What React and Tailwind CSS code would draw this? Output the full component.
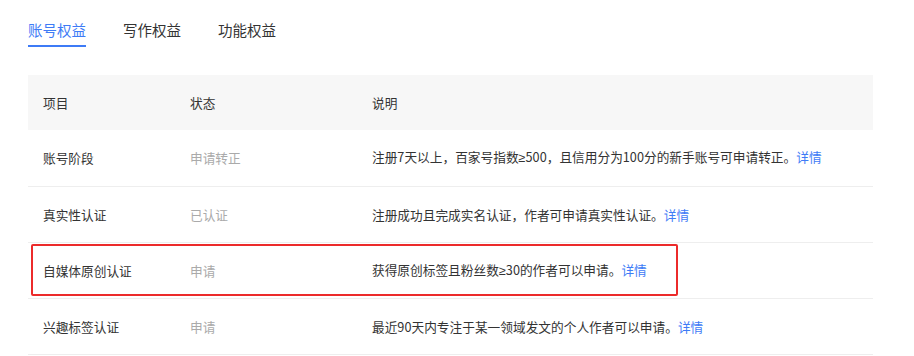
const tabs = ['账号权益', '写作权益', '功能权益'];

const rows = [
  { name: '账号阶段', status: '申请转正', desc: ['注册7天以上，百家号指数', '≥', '500，且信用分为100分的新手账号可申请转正。'] },
  { name: '真实性认证', status: '已认证', desc: ['注册成功且完成实名认证，作者可申请真实性认证。'] },
  { name: '自媒体原创认证', status: '申请', desc: ['获得原创标签且粉丝数', '≥', '30的作者可以申请。'] },
  { name: '兴趣标签认证', status: '申请', desc: ['最近90天内专注于某一领域发文的个人作者可以申请。'] },
];

export default function App() {
  return (
    <div
      className="relative w-[914px] h-[356px] overflow-hidden bg-white pl-[28px]"
      style={{ fontFamily: '"Noto Sans CJK SC", "Noto Sans", sans-serif' }}
    >
      {/* TABS */}
      <div className="flex gap-[37px] pt-[19px]">
        {tabs.map((t, i) => (
          <div key={t} className="flex flex-col items-center">
            <span className={`text-[14.5px] leading-[22px] ${i === 0 ? 'text-[#3e7bf6]' : 'text-[#333]'}`}>{t}</span>
            <div className={`mt-[4px] h-[2px] w-full ${i === 0 ? 'bg-[#3e7bf6]' : 'bg-transparent'}`} />
          </div>
        ))}
      </div>

      {/* TABLE */}
      <div className="mt-[28px] w-[845px] text-[12.7px]">
        <div className="grid grid-cols-[147px_182px_1fr] h-[55px] items-center bg-[#f7f7f7] text-[#333]">
          <div className="pl-[15px]">项目</div>
          <div className="pl-[15px]">状态</div>
          <div className="pl-[15px]">说明</div>
        </div>
        {rows.map((r, idx) => (
          <div
            key={r.name}
            className={`grid grid-cols-[147px_182px_1fr] items-center border-b border-[#eeeeee] ${idx === 0 ? 'h-[57px]' : 'h-[56px]'}`}
          >
            <div className="pl-[15px] text-[#333]">{r.name}</div>
            <div className="pl-[15px] text-[#aaa]">{r.status}</div>
            <div className="pl-[15px] text-[#333] whitespace-nowrap">
              {r.desc.map((part, j) =>
                part === '≥' ? (
                  <span key={j} className="font-['Liberation_Sans']">≥</span>
                ) : (
                  <span key={j}>{part}</span>
                )
              )}
              <span className="text-[#3e7bf6]">详情</span>
            </div>
          </div>
        ))}
      </div>

      {/* HIGHLIGHT */}
      <div className="absolute left-[31px] top-[244px] w-[647px] h-[52px] border-2 border-[#ec2b2b] rounded-[2px] pointer-events-none" />
    </div>
  );
}
